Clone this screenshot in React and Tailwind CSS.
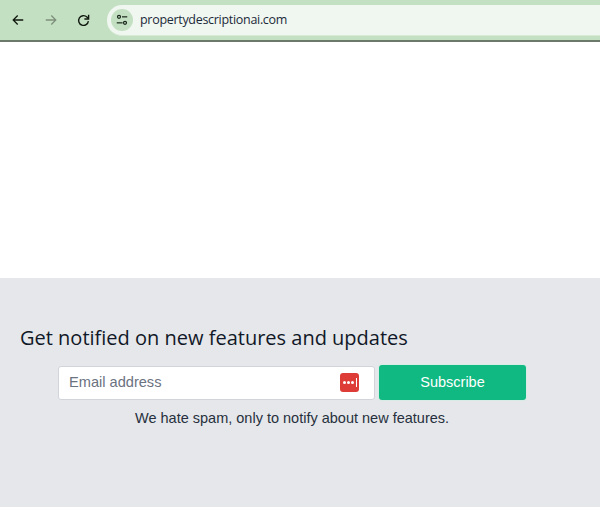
import React from "react";

function BackIcon({ className }) {
  return (
    <svg viewBox="0 0 16 16" className={className} fill="none" stroke="currentColor" strokeWidth="1.7">
      <path d="M15 8H1.8M7.6 2 1.6 8l6 6" />
    </svg>
  );
}

function ForwardIcon({ className }) {
  return (
    <svg viewBox="0 0 16 16" className={className} fill="none" stroke="currentColor" strokeWidth="1.7">
      <path d="M1 8h13.2M8.4 2l6 6-6 6" />
    </svg>
  );
}

function ReloadIcon({ className }) {
  return (
    <svg viewBox="0 0 16 16" className={className} fill="none" stroke="currentColor" strokeWidth="1.7">
      <path d="M14 8.8A6 6 0 1 1 12.2 3.7L14 5.5" />
      <path d="M14.3 1v5.2H9.1" />
    </svg>
  );
}

function TuneIcon({ className }) {
  return (
    <svg viewBox="0 0 16 16" className={className} fill="none" stroke="currentColor" strokeWidth="1.6">
      <circle cx="4" cy="3.8" r="2" />
      <path d="M8 3.8h7" />
      <circle cx="12" cy="11.8" r="2" />
      <path d="M1 11.8h7.8" />
    </svg>
  );
}

function PasswordBadge() {
  return (
    <div className="absolute left-[281px] top-[6px] flex h-[19px] w-[19px] items-center justify-center gap-[1px] rounded-[3px] bg-[#dd3d36]">
      <span className="h-[3px] w-[3px] rounded-full bg-white" />
      <span className="h-[3px] w-[3px] rounded-full bg-white" />
      <span className="h-[3px] w-[3px] rounded-full bg-white" />
      <span className="ml-[1px] h-[9px] w-[1px] bg-white" />
    </div>
  );
}

export default function App() {
  return (
    <div className="flex h-[507px] flex-col overflow-hidden bg-white font-['Liberation_Sans',sans-serif]">
      {/* Browser bar */}
      <div className="flex h-[42px] shrink-0 flex-col bg-[#c4e0c2]">
        <div className="flex h-[40px] items-start">
          <div className="mt-[5px] flex h-[30px] w-[107px] shrink-0 items-center">
            <BackIcon className="ml-[12px] h-[12px] w-[12px] text-[#10180f]" />
            <ForwardIcon className="ml-[21px] h-[12px] w-[12px] text-[#7d8f7c]" />
            <ReloadIcon className="ml-[20px] h-[13px] w-[13px] text-[#10180f]" />
          </div>
          <div className="mt-[5px] flex h-[31px] flex-1 items-center rounded-l-[15px] border-b border-[#d9ead7] bg-[#f0f7f0] pl-[4px]">
            <div className="flex h-[22px] w-[22px] items-center justify-center rounded-full bg-[#c4e0c2] text-[#19261a]">
              <TuneIcon className="h-[12px] w-[12px]" />
            </div>
            <span className="ml-[7px] font-['Open_Sans',sans-serif] text-[12.5px] tracking-[-0.3px] text-[#1c2a3a]">
              propertydescriptionai.com
            </span>
          </div>
        </div>
        <div className="h-[2px] bg-[#6b7a6a]" />
      </div>

      {/* White page area */}
      <div className="h-[236px] shrink-0 bg-white" />

      {/* Newsletter */}
      <div className="flex flex-1 flex-col bg-[#e5e7eb] pt-[46px]">
        <h2 className="pl-[20px] font-['Open_Sans',sans-serif] text-[20px] leading-[28px] font-medium text-[#111827]">
          Get notified on new features and updates
        </h2>
        <div className="mt-[13px] ml-[58px] flex items-center gap-[4px]">
          <div className="relative flex h-[34px] w-[317px] items-center rounded-[3px] border border-[#d1d5db] bg-white pl-[10px] text-[14.6px] text-[#6b7280]">
            Email address
            <PasswordBadge />
          </div>
          <button className="h-[35px] w-[147px] rounded-[3px] bg-[#10b981] text-[14.5px] text-white ring-1 ring-[#d8ebe4]">
            Subscribe
          </button>
        </div>
        <p className="mt-[9px] pl-[135px] text-[14.5px] leading-[18px] text-[#27303d]">
          We hate spam, only to notify about new features.
        </p>
      </div>
    </div>
  );
}
